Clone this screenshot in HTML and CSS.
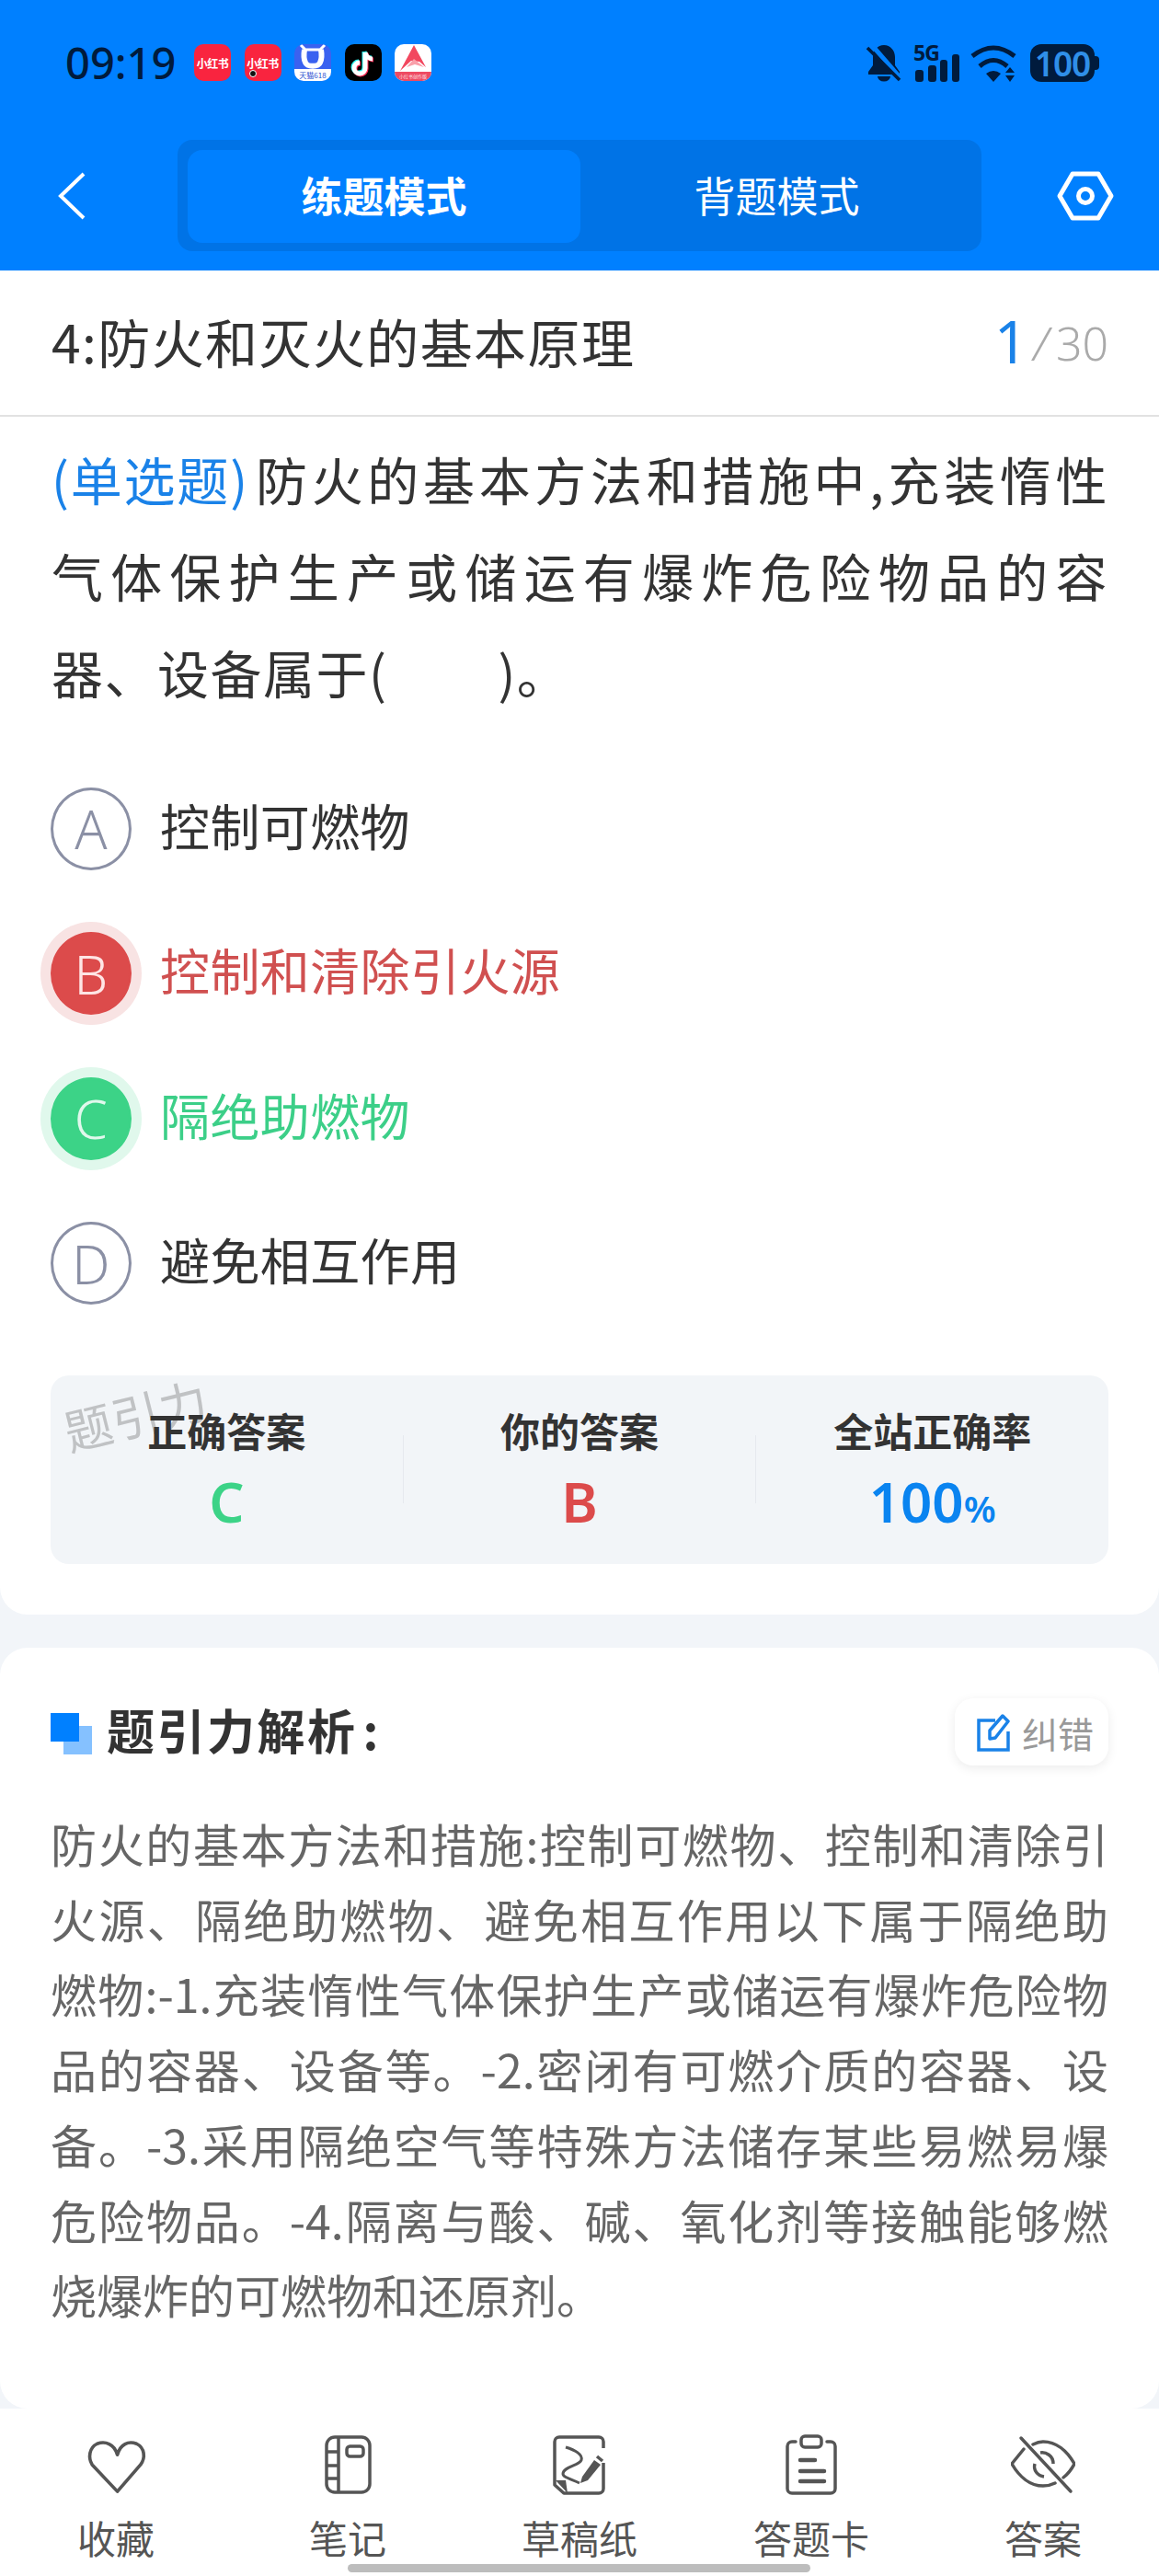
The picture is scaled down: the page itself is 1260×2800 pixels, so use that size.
FILE: index.html

```html
<!DOCTYPE html>
<html>
<head>
  <title>练题模式</title>
  <link rel="stylesheet" href="styles.css">
</head>
<body>
  <div class="header">
    <div class="status">
      <span class="time">09:19</span>
      <div class="apps">
        <div class="app red"><span>小红书</span></div>
        <div class="app red"><span>小红书</span><i class="dot"></i></div>
        <div class="app tmall">
          <svg class="tmall-ox" viewBox="0 0 40 27"><path d="M7 1l5 5h16l5-5" fill="none" stroke="#fff" stroke-width="3"/><path d="M11 6c-1 6-1 10 1 14 2 5 14 5 16 0 2-4 2-8 1-14" fill="none" stroke="#fff" stroke-width="6"/></svg>
          <span class="band">天猫618</span>
        </div>
        <div class="app tiktok">
          <svg viewBox="0 0 40 40">
            <path d="M22 9v17a6 6 0 1 1-6-6M22 9c1 4 4 7 8 7" fill="none" stroke="#25f4ee" stroke-width="5" transform="translate(-1 -1)"/>
            <path d="M22 9v17a6 6 0 1 1-6-6M22 9c1 4 4 7 8 7" fill="none" stroke="#fe2c55" stroke-width="5" transform="translate(1 1)"/>
            <path d="M22 9v17a6 6 0 1 1-6-6M22 9c1 4 4 7 8 7" fill="none" stroke="#fff" stroke-width="5"/>
          </svg>
        </div>
        <div class="app pro">
          <svg viewBox="0 0 40 30"><path d="M21 1L6 29l12-11 9 1 7 6z" fill="#f2485f"/><path d="M13 25l8-9 11 9-10-3z" fill="#f9a0aa"/></svg>
          <span class="band">小红书创作版</span>
        </div>
      </div>
      <div class="sys">
        <svg class="bell" width="38" height="41" viewBox="0 0 38 41">
          <path d="M19 1c-7 0-12 6-12 13v9l-5 7v3h34v-3l-5-7v-9c0-7-5-13-12-13z" fill="#001b3d"/>
          <path d="M12 35a7 5.500 0 0 0 14 0z" fill="#001b3d"/>
          <path d="M5 0l33 38" stroke="#0080ff" stroke-width="5"/>
          <path d="M1 4l35 35" stroke="#001b3d" stroke-width="3.500"/>
        </svg>
        <div class="signal">
          <span class="five-g">5G</span>
          <svg width="48" height="30" viewBox="0 0 48 30">
            <rect x="0" y="17" width="9" height="13" rx="3" fill="#001b3d"/>
            <rect x="14" y="12" width="9" height="18" rx="3" fill="#001b3d"/>
            <rect x="27" y="6" width="8" height="24" rx="3" fill="#001b3d"/>
            <rect x="40" y="0" width="8" height="30" rx="3" fill="#001b3d"/>
          </svg>
        </div>
        <svg class="wifi" width="54" height="41" viewBox="0 0 54 41">
          <path d="M3 13Q26-5 49 13M11 24Q26 11 41 24" fill="none" stroke="#001b3d" stroke-width="5"/>
          <path d="M18 32Q26 26 34 32L26 41z" fill="#001b3d"/>
          <path d="M44 25l5 6H39zM44 41l5-7H39z" fill="#001b3d"/>
        </svg>
        <div class="battery"><span>100</span></div>
      </div>
    </div>
    <div class="nav">
      <svg class="back" width="30" height="52" viewBox="0 0 30 52"><path d="M28 2L3 26l25 24" fill="none" stroke="#fff" stroke-width="4"/></svg>
      <div class="tabs">
        <div class="tab active">练题模式</div>
        <div class="tab">背题模式</div>
      </div>
      <svg class="gear" width="62" height="56" viewBox="0 0 62 56">
        <path d="M17 4h28l14 24-14 24H17L3 28z" fill="none" stroke="#fff" stroke-width="5" stroke-linejoin="round"/>
        <circle cx="31" cy="28" r="7.500" fill="none" stroke="#fff" stroke-width="5"/>
      </svg>
    </div>
  </div>

  <div class="card first">
    <div class="title-row">
      <span class="title">4:防火和灭火的基本原理</span>
      <span class="count"><b>1</b><i>/</i>30</span>
    </div>
    <div class="question">
      <span><em>(单选题)</em>防火的基本方法和措施中,充装惰性</span>
      <span>气体保护生产或储运有爆炸危险物品的容</span>
      <span>器、设备属于(<u></u>)。</span>
    </div>
    <div class="options">
      <div class="option"><div class="letter">A</div><div class="opt-text">控制可燃物</div></div>
      <div class="option wrong"><div class="letter">B</div><div class="opt-text">控制和清除引火源</div></div>
      <div class="option right"><div class="letter">C</div><div class="opt-text">隔绝助燃物</div></div>
      <div class="option"><div class="letter">D</div><div class="opt-text">避免相互作用</div></div>
    </div>
    <div class="stats">
      <div class="watermark">题引力</div>
      <div class="stat"><div class="stat-label">正确答案</div><div class="stat-val green">C</div></div>
      <div class="stat-line"></div>
      <div class="stat"><div class="stat-label">你的答案</div><div class="stat-val red-text">B</div></div>
      <div class="stat-line"></div>
      <div class="stat"><div class="stat-label">全站正确率</div><div class="stat-val blue">100<small>%</small></div></div>
    </div>
  </div>

  <div class="card second">
    <div class="analysis-head">
      <div class="squares"><i></i><i></i></div>
      <h2>题引力解析<span>:</span></h2>
      <div class="fix">
        <svg width="36" height="42" viewBox="0 0 36 42">
          <path d="M20 8H2v32h32V20" fill="none" stroke="#1a82e8" stroke-width="3.500"/>
          <path d="M14 28V19L28 3l6 6-14 18z" fill="none" stroke="#1a82e8" stroke-width="3.500" stroke-linejoin="round"/>
        </svg>
        <span>纠错</span>
      </div>
    </div>
    <div class="analysis">
      <span>防火的基本方法和措施:控制可燃物、控制和清除引</span>
      <span>火源、隔绝助燃物、避免相互作用以下属于隔绝助</span>
      <span>燃物:-1.充装惰性气体保护生产或储运有爆炸危险物</span>
      <span>品的容器、设备等。-2.密闭有可燃介质的容器、设</span>
      <span>备。-3.采用隔绝空气等特殊方法储存某些易燃易爆</span>
      <span>危险物品。-4.隔离与酸、碱、氧化剂等接触能够燃</span>
      <span>烧爆炸的可燃物和还原剂。</span>
    </div>
  </div>

  <div class="tabbar">
    <div class="item">
      <svg width="70" height="66" viewBox="0 0 70 66"><path d="M36 27c-3-11-12-14-20-11-8 4-9 14-5 21l25 27 23-27c5-7 4-17-4-21-8-3-16 0-19 11z" transform="translate(-3 -7) scale(1.100 1.080)" fill="none" stroke="#555" stroke-width="3.300" stroke-linejoin="round"/></svg>
      <span>收藏</span>
    </div>
    <div class="item">
      <svg width="70" height="66" viewBox="0 0 70 66">
        <rect x="12" y="3" width="47" height="60" rx="9" fill="none" stroke="#555" stroke-width="3.500"/>
        <path d="M25 3v60M12 19h13M12 34h13M12 48h13" fill="none" stroke="#555" stroke-width="3.500"/>
        <rect x="34" y="13" width="18" height="11" rx="3.500" fill="none" stroke="#555" stroke-width="3.500"/>
      </svg>
      <span>笔记</span>
    </div>
    <div class="item">
      <svg width="70" height="66" viewBox="0 0 70 66">
        <path d="M61 15V8a5 5 0 0 0-5-5H13a5 5 0 0 0-5 5v47l10 9h38a5 5 0 0 0 5-5V31" fill="none" stroke="#555" stroke-width="3.500" stroke-linejoin="round"/>
        <path d="M9 50h11l2 14z" fill="#555"/>
        <path d="M20 14c10 3 19 8 17 14-2 6-20 7-20 15 0 4 10 6 18 10" fill="none" stroke="#555" stroke-width="3"/>
        <path d="M38 46l13-18 7 5-14 17-8 3z" fill="#555"/>
        <path d="M54 24l6 5" stroke="#555" stroke-width="3.500"/>
      </svg>
      <span>草稿纸</span>
    </div>
    <div class="item">
      <svg width="70" height="66" viewBox="0 0 70 66">
        <path d="M18 8h-4a5 5 0 0 0-5 5v46a5 5 0 0 0 5 5h42a5 5 0 0 0 5-5V13a5 5 0 0 0-5-5h-4" fill="none" stroke="#555" stroke-width="3.500" stroke-linecap="round"/>
        <rect x="24" y="2" width="22" height="12" rx="4" fill="none" stroke="#555" stroke-width="3.500"/>
        <path d="M23 28h16M23 40h26M23 51h26" stroke="#555" stroke-width="4.500" stroke-linecap="round"/>
      </svg>
      <span>答题卡</span>
    </div>
    <div class="item">
      <svg width="70" height="66" viewBox="0 0 70 66">
        <path d="M14 17L1 33c8 14 20 24 34 24 5 0 9-1 13-3M24 12c4-2 7-3 11-3 14 0 26 10 34 24-3 6-7 11-12 15" transform="translate(0 -1)" fill="none" stroke="#555" stroke-width="3.500" stroke-linecap="round" stroke-linejoin="round"/>
        <path d="M11 4l54 58" stroke="#555" stroke-width="3.500" stroke-linecap="round"/>
        <path d="M26 32c-2 7 3 13 10 14M32 20c6-1 14 3 14 12" fill="none" stroke="#555" stroke-width="3.500"/>
      </svg>
      <span>答案</span>
    </div>
    <div class="home-bar"></div>
  </div>
</body>
</html>
```

FILE: styles.css

```css
body {
  margin: 0;
  width: 1260px;
  background-color: #f2f5f9;
  font-family: "Noto Sans CJK SC", "Noto Sans", sans-serif;
  color: #333;
}

/* header */
.header {
  background-color: #0080ff;
  height: 294px;
  box-sizing: border-box;
  padding-top: 47px;
}

.status {
  display: flex;
  align-items: center;
  height: 42px;
  padding: 0 70px 0 71px;
}

.time {
  font-family: "Noto Sans", sans-serif;
  font-size: 47px;
  font-weight: 500;
  line-height: 42px;
  color: #001b3d;
  width: 140px;
}

.apps {
  display: flex;
  gap: 14.500px;
}

.app {
  position: relative;
  width: 40px;
  height: 40px;
  border-radius: 10px;
  overflow: hidden;
  display: flex;
  flex-direction: column;
  align-items: center;
  justify-content: center;
}

.app.red {
  background-color: #f9243f;
  color: #fff;
  font-size: 12px;
  font-weight: 700;
  letter-spacing: -0.500px;
  white-space: nowrap;
}

.dot {
  position: absolute;
  left: 5px;
  bottom: 4px;
  width: 8px;
  height: 8px;
  border-radius: 50%;
  background-color: #111;
  border: 1px solid #fff;
  box-sizing: border-box;
}

.app.tmall {
  background-color: #3a62f0;
}

.tmall-ox {
  width: 40px;
  height: 27px;
  flex: none;
}

.app.tmall .band {
  background-color: #fff;
  color: #2a4fd0;
  width: 100%;
  height: 13px;
  font-size: 8px;
  line-height: 13px;
  text-align: center;
  white-space: nowrap;
}

.app.tiktok {
  background-color: #000;
}

.app.tiktok svg {
  width: 40px;
  height: 40px;
}

.app.pro {
  background-color: #fff;
}

.app.pro svg {
  width: 40px;
  height: 30px;
  flex: none;
}

.app.pro .band {
  background-color: #ee4a62;
  color: #ffe4e8;
  width: 100%;
  height: 10px;
  font-size: 5px;
  line-height: 10px;
  text-align: center;
  white-space: nowrap;
}

.sys {
  display: flex;
  align-items: center;
  margin-left: auto;
}

.signal {
  position: relative;
  margin-left: 15px;
  height: 41px;
  width: 48px;
  display: flex;
  align-items: flex-end;
}

.five-g {
  position: absolute;
  left: -2px;
  top: -4px;
  font-family: "Noto Sans", sans-serif;
  font-size: 23px;
  font-weight: 700;
  line-height: 26px;
  color: #001b3d;
  letter-spacing: -1px;
}

.wifi {
  margin-left: 11px;
}

.battery {
  position: relative;
  margin-left: 12px;
  width: 70px;
  height: 41px;
  border-radius: 12px;
  background-color: #001b3d;
  display: flex;
  align-items: center;
  justify-content: center;
}

.battery::after {
  content: "";
  position: absolute;
  right: -5px;
  top: 13px;
  width: 5px;
  height: 15px;
  border-radius: 0 4px 4px 0;
  background-color: #001b3d;
}

.battery span {
  font-family: "Noto Sans", sans-serif;
  font-size: 37px;
  font-weight: 600;
  line-height: 41px;
  color: #2f8fe8;
  letter-spacing: -1px;
}

.nav {
  display: flex;
  align-items: center;
  margin-top: 63px;
  padding-left: 63px;
  height: 121px;
}

.tabs {
  margin-left: 100px;
  width: 874px;
  height: 121px;
  box-sizing: border-box;
  padding: 11px 9px 9px 11px;
  background-color: #0073e6;
  border-radius: 16px;
  display: flex;
}

.tab {
  flex: 1;
  border-radius: 16px;
  text-align: center;
  color: #fff;
  font-size: 45px;
  line-height: 98px;
}

.tab.active {
  background-color: #0080ff;
  font-weight: 700;
}

.gear {
  margin-left: 82px;
}

/* question */
.card {
  background-color: #fff;
}

.first {
  border-radius: 0 0 30px 30px;
  padding-bottom: 55px;
}

.title-row {
  height: 159px;
  box-sizing: border-box;
  padding: 0 55px 5px 56px;
  border-bottom: 2px solid #e2e2e2;
  display: flex;
  align-items: center;
  justify-content: space-between;
}

.title {
  font-size: 57px;
  letter-spacing: 1.400px;
}

.count {
  font-family: "Noto Sans", sans-serif;
  font-size: 50px;
  font-weight: 300;
  color: #aaa;
  margin-bottom: 6px;
}

.count b {
  font-size: 64px;
  font-weight: 400;
  color: #1a82e8;
  position: relative;
  top: 3px;
}

.count i {
  margin: 0 8px 0 6px;
}

.question {
  padding: 14px 55px 0 56px;
  font-size: 56px;
  line-height: 105px;
  letter-spacing: 1.500px;
}

.question span {
  display: block;
  text-align-last: justify;
}

.question span:last-child {
  text-align-last: left;
}

.question em {
  display: inline-block;
  font-style: normal;
  letter-spacing: 1.800px;
  margin-right: 4px;
  color: #1a82e8;
}

.question u {
  display: inline-block;
  width: 120px;
  text-decoration: none;
}

.options {
  padding: 40px 55px 0;
}

.option {
  display: flex;
  align-items: center;
  gap: 31px;
  height: 157.500px;
  font-size: 54px;
  letter-spacing: 0.400px;
}

.opt-text {
  margin-bottom: 9px;
}

.letter {
  width: 88px;
  height: 90px;
  box-sizing: border-box;
  border: 3px solid #8b90a5;
  border-radius: 50%;
  color: #8b90a5;
  font-family: "Noto Sans", sans-serif;
  font-size: 58px;
  font-weight: 300;
  display: flex;
  align-items: center;
  justify-content: center;
}

.wrong {
  color: #d05050;
}

.wrong .letter {
  background-color: #dc4b4b;
  border-color: #dc4b4b;
  color: #ffe5e5;
  box-shadow: 0 0 0 11px #f8e3e3;
}

.right {
  color: #3ccf88;
}

.right .letter {
  background-color: #3cd387;
  border-color: #3cd387;
  color: #e0f8ec;
  box-shadow: 0 0 0 11px #e0f8ec;
}

.stats {
  position: relative;
  margin: 43px 55px 0;
  height: 205px;
  border-radius: 20px;
  background-color: #f2f5f8;
  display: flex;
  align-items: flex-start;
}

.watermark {
  position: absolute;
  left: 13px;
  top: 12px;
  font-size: 52px;
  line-height: 60px;
  letter-spacing: 1px;
  color: #c0c2c4;
  transform: rotate(-14deg);
}

.stat {
  position: relative;
  flex: 1;
  text-align: center;
  padding-top: 34px;
}

.stat-label {
  font-size: 43px;
  font-weight: 700;
  line-height: 50px;
}

.stat-val {
  font-family: "Noto Sans", sans-serif;
  font-size: 60px;
  font-weight: 600;
  line-height: 70px;
  margin-top: 18px;
}

.stat-val small {
  font-size: 40px;
}

.green {
  color: #3cd387;
}

.red-text {
  color: #dc4b4b;
}

.blue {
  color: #0a84f0;
}

.stat-line {
  width: 1px;
  height: 74px;
  margin-top: 65px;
  background-color: #e6e9ee;
}

/* analysis */
.second {
  margin-top: 36px;
  border-radius: 30px;
  padding: 55px 55px 83px;
}

.analysis-head {
  display: flex;
  align-items: center;
  height: 73px;
}

.squares {
  position: relative;
  width: 45px;
  height: 45px;
  flex: none;
  margin-top: 3px;
}

.squares i {
  position: absolute;
  left: 0;
  top: 0;
  width: 31px;
  height: 31px;
  background-color: #0080ff;
}

.squares i:first-child {
  left: 14px;
  top: 14px;
  background-color: #85c1ff;
}

h2 {
  margin: -6px 0 0 16px;
  font-size: 52px;
  line-height: 73px;
  font-weight: 700;
  letter-spacing: 2.500px;
}

h2 span {
  margin-left: 6px;
}

.fix {
  margin-left: auto;
  width: 167px;
  height: 73px;
  box-sizing: border-box;
  border-radius: 20px;
  background-color: #fff;
  box-shadow: 0 3px 12px rgba(0, 0, 0, 0.08);
  display: flex;
  align-items: center;
  gap: 13px;
  padding-left: 24px;
  font-size: 39px;
  color: #999;
}

.analysis {
  margin-top: 44px;
  font-size: 50px;
  line-height: 81.700px;
  color: #666;
}

.analysis span {
  display: block;
  text-align-last: justify;
  white-space: nowrap;
}

.analysis span:last-child {
  text-align-last: left;
}

/* bottom bar */
.tabbar {
  position: relative;
  height: 182px;
  box-sizing: border-box;
  padding-top: 28px;
  background-color: #fff;
  display: flex;
}

.item {
  flex: 1;
  display: flex;
  flex-direction: column;
  align-items: center;
  gap: 21px;
  font-size: 42px;
  line-height: 50px;
  color: #555;
}

.home-bar {
  position: absolute;
  left: 378px;
  bottom: 4px;
  width: 503px;
  height: 9px;
  border-radius: 5px;
  background-color: #bdbdbd;
}
```
